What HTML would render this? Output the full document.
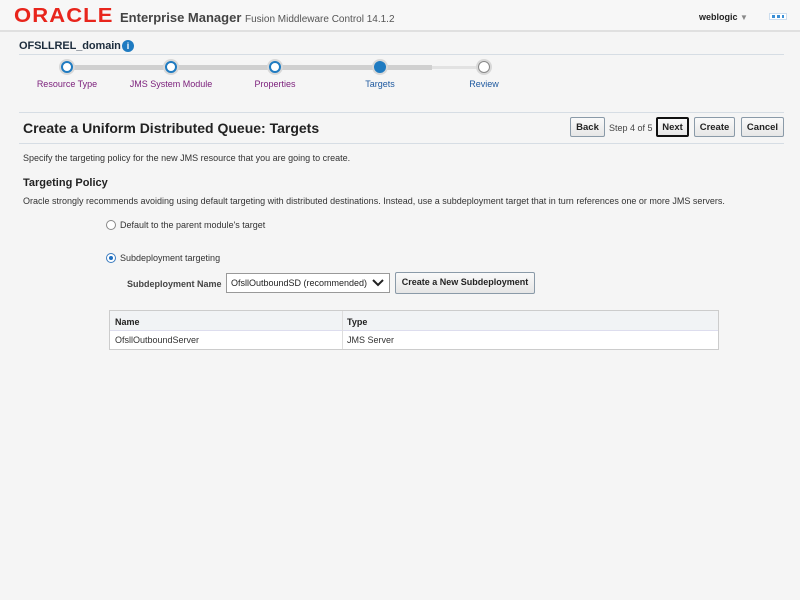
<!DOCTYPE html>
<html><head><style>
body{margin:0;width:800px;height:600px;background:#f5f5f5;font-family:"Liberation Sans",Arial,sans-serif;font-size:9px;color:#333;position:relative;overflow:hidden}
.a{position:absolute}
.hdr{left:0;top:0;width:800px;height:30px;background:#f7f7f7;border-bottom:2px solid #e0e0e0}
.btn{position:absolute;height:20px;border:1px solid #8a9aa8;background:linear-gradient(#fafafa,#e6e6e6);font-weight:bold;font-size:9.5px;line-height:19px;text-align:center;color:#222;box-sizing:border-box;border-radius:2px;white-space:nowrap}
.c{position:absolute;width:8px;height:8px;border-radius:50%;background:#fff;border:2px solid #1f7bc1;box-shadow:0 0 0 2px #d8d8d8}
.lbl{position:absolute;top:79px;font-size:9px;color:#7a1d7a;transform:translateX(-50%);white-space:nowrap}
</style></head><body>
<div class="a hdr"></div>
<div class="a" style="left:14px;top:6px;font-size:20px;font-weight:bold;color:#e8251c;letter-spacing:1px;transform:scaleX(1.1);transform-origin:left;line-height:20px">ORACLE</div>
<div class="a" style="left:120px;top:10px;font-size:13px;color:#444;font-weight:bold">Enterprise Manager <span style="font-size:10px;font-weight:normal;color:#555">Fusion Middleware Control 14.1.2</span></div>
<div class="a" style="left:699px;top:12px;font-size:9px;font-weight:bold;color:#222">weblogic <span style="color:#888;font-size:8px">▼</span></div>
<div class="a" style="left:769px;top:13px;width:16px;height:5px;border:1px solid #cde;background:#fff"><div style="margin:1px 2px;height:3px;background:repeating-linear-gradient(90deg,#3a8fd6 0 3px,transparent 3px 5px)"></div></div>
<div class="a" style="left:19px;top:40px;font-size:11px;font-weight:bold;color:#1d2d3d;letter-spacing:-0.1px">OFSLLREL_domain</div>
<div class="a" style="left:122px;top:40px;width:12px;height:12px;border-radius:50%;background:#1f7bc1;color:#fff;font-size:9px;font-weight:bold;text-align:center;line-height:12px">i</div>
<div class="a" style="left:19px;top:54px;width:765px;height:1px;background:#d6dde4"></div>
<div class="a" style="left:67px;top:65px;width:365px;height:5px;background:#d0d0d0"></div>
<div class="a" style="left:432px;top:66px;width:52px;height:3px;background:#e2e2e2"></div>
<div class="c" style="left:61px;top:61px"></div>
<div class="c" style="left:165px;top:61px"></div>
<div class="c" style="left:269px;top:61px"></div>
<div class="c" style="left:374px;top:61px;background:#1f7bc1"></div>
<div class="c" style="left:478px;top:61px;border-color:#888;border-width:1px;width:10px;height:10px"></div>
<div class="lbl" style="left:67px">Resource Type</div>
<div class="lbl" style="left:171px">JMS System Module</div>
<div class="lbl" style="left:275px">Properties</div>
<div class="lbl" style="left:380px;color:#1f5aa0">Targets</div>
<div class="lbl" style="left:484px;color:#1f5aa0">Review</div>
<div class="a" style="left:19px;top:112px;width:765px;height:1px;background:#d6dde4"></div>
<div class="a" style="left:23px;top:120px;font-size:14px;font-weight:bold;color:#222">Create a Uniform Distributed Queue: Targets</div>
<div class="btn" style="left:570px;top:117px;width:35px">Back</div>
<div class="a" style="left:609px;top:123px;font-size:9px;color:#444">Step 4 of 5</div>
<div class="btn" style="left:656px;top:117px;width:33px;border:2px solid #111;line-height:17px">Next</div>
<div class="btn" style="left:694px;top:117px;width:41px">Create</div>
<div class="btn" style="left:741px;top:117px;width:43px">Cancel</div>
<div class="a" style="left:19px;top:143px;width:765px;height:1px;background:#d6dde4"></div>
<div class="a" style="left:23px;top:153px">Specify the targeting policy for the new JMS resource that you are going to create.</div>
<div class="a" style="left:23px;top:177px;font-size:11px;font-weight:bold;color:#222">Targeting Policy</div>
<div class="a" style="left:23px;top:196px">Oracle strongly recommends avoiding using default targeting with distributed destinations. Instead, use a subdeployment target that in turn references one or more JMS servers.</div>
<div class="a" style="left:106px;top:220px;width:8px;height:8px;border:1px solid #888;border-radius:50%;background:#fff"></div>
<div class="a" style="left:120px;top:220px">Default to the parent module's target</div>
<div class="a" style="left:106px;top:253px;width:8px;height:8px;border:1px solid #3a7bbf;border-radius:50%;background:#fff"><div style="margin:2px;width:4px;height:4px;border-radius:50%;background:#1f6fc1"></div></div>
<div class="a" style="left:120px;top:253px">Subdeployment targeting</div>
<div class="a" style="left:127px;top:279px;font-weight:bold;color:#444">Subdeployment Name</div>
<div class="a" style="left:226px;top:273px;width:164px;height:20px;border:1px solid #999;background:#fff;box-sizing:border-box"><span style="position:absolute;left:4px;top:4px;color:#222">OfsllOutboundSD (recommended)</span><svg style="position:absolute;right:5px;top:5px" width="12" height="8"><path d="M1 1 L6 6 L11 1" stroke="#222" stroke-width="2" fill="none"/></svg></div>
<div class="btn" style="left:395px;top:272px;width:140px;height:22px;font-size:9px">Create a New Subdeployment</div>
<div class="a" style="left:109px;top:310px;width:610px;height:40px;border:1px solid #ccc;background:#fff;box-sizing:border-box">
<div style="height:19px;background:#f1f3f5;border-bottom:1px solid #dde;position:relative;font-weight:bold;color:#222">
<span class="a" style="left:5px;top:6px">Name</span><span class="a" style="left:237px;top:6px">Type</span></div>
<div class="a" style="left:232px;top:0;width:1px;height:38px;background:#ddd"></div>
<span class="a" style="left:5px;top:24px">OfsllOutboundServer</span><span class="a" style="left:237px;top:24px">JMS Server</span>
</div>
</body></html>
